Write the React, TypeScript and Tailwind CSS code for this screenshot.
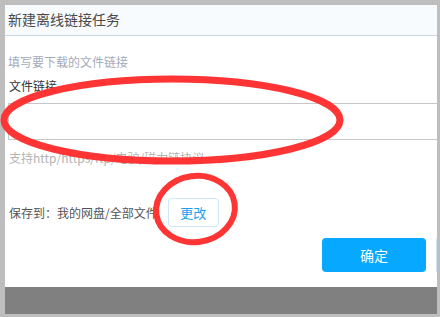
import React from 'react';

const font = { fontFamily: '"Noto Sans CJK SC", "Noto Sans", sans-serif' };

export default function App() {
  return (
    <div className="relative w-[440px] h-[317px] bg-[#bebebe] pt-[5px] pl-[5px] overflow-hidden" style={font}>
      <div className="w-[432px] h-[309px] bg-white flex flex-col overflow-hidden">
        <div className="h-[31px] bg-[#f7fbfe] border-b border-[#c8dbe6] pl-[3px] pt-[1px]">
          <span className="text-[14px] leading-[16px] text-[#4a4a4a]">新建离线链接任务</span>
        </div>

        <div className="pl-[3px] flex flex-col">
          <div className="mt-[18px] pl-[-1px] text-[12px] leading-[16px] text-[#a3abbb]">填写要下载的文件链接</div>
          <div className="mt-[8px] pl-[1px] text-[12px] leading-[16px] text-[#333]">文件链接</div>
          <div className="mt-[9px] h-[37px] border border-r-0 border-[#c6c6c6]"></div>
          <div className="mt-[10px] pl-[1px] text-[12px] leading-[16px] text-[#b3b3b3]">支持http/https/ftp/电驴/磁力链协议</div>

          <div className="mt-[32px] flex items-center">
            <span className="pl-[1px] text-[12px] leading-[16px] text-[#555]">保存到：我的网盘/全部文件</span>
            <button className="ml-[10px] w-[51px] h-[29px] rounded-[3px] border border-[#cfe8fa] text-[13px] text-[#1a9ff0]">更改</button>
          </div>
        </div>

        <div className="mt-[11px] flex justify-end items-center">
          <button className="w-[104px] h-[34px] rounded-[4px] bg-[#07a8ff] text-white text-[14px]">确定</button>
          <div className="ml-[10px] w-[1px] h-[34px] bg-[#cfeaff]"></div>
        </div>

        <div className="mt-auto h-[27px] bg-[#808080]"></div>
      </div>

      <svg className="absolute left-0 top-0 pointer-events-none" width="440" height="317" viewBox="0 0 440 317">
        <ellipse cx="172" cy="120" rx="168" ry="41" fill="none" stroke="#ff3535" strokeWidth="7" />
        <ellipse cx="195.5" cy="209" rx="39.5" ry="33" fill="none" stroke="#ff3535" strokeWidth="6" transform="rotate(-8 195.5 209)" />
      </svg>
    </div>
  );
}
